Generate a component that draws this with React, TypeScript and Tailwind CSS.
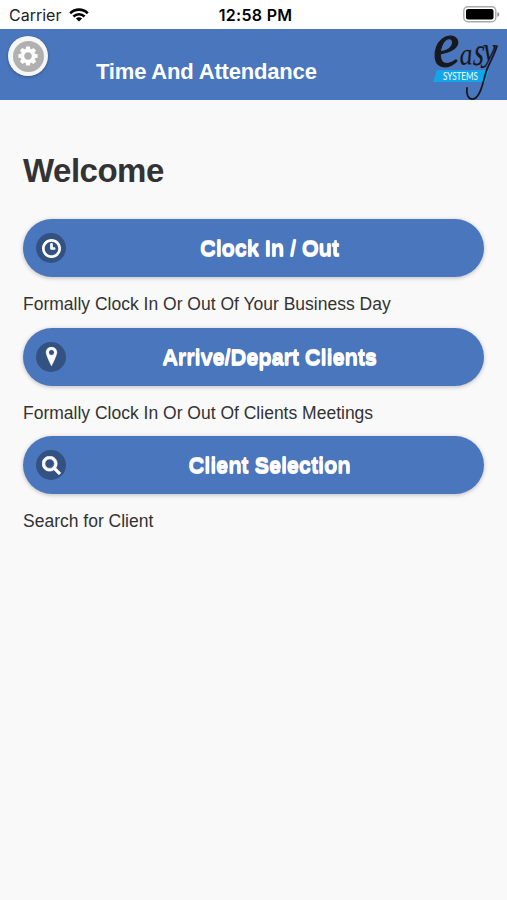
import type { ReactNode } from "react";

const LOCATION = "M7,0C4.791,0,3,1.791,3,4c0,2,4,10,4,10s4-8,4-10C11,1.791,9.209,0,7,0z M7,6C5.896,6,5,5.104,5,4s0.896-2,2-2c1.104,0,2,0.896,2,2S8.104,6,7,6z";
const CLOCK = "M7,0C3.134,0,0,3.134,0,7s3.134,7,7,7s7-3.134,7-7S10.866,0,7,0z M7,12c-2.762,0-5-2.238-5-5s2.238-5,5-5s5,2.238,5,5S9.762,12,7,12z M9,6H8V4c0-0.553-0.447-1-1-1S6,3.447,6,4v3c0,0.553,0.447,1,1,1h2c0.553,0,1-0.447,1-1S9.553,6,9,6z";
const SEARCH = "M10.171,8.766c0.617-0.888,0.979-1.964,0.979-3.126c0-3.037-2.463-5.5-5.5-5.5s-5.5,2.463-5.5,5.5s2.463,5.5,5.5,5.5c1.152,0,2.223-0.355,3.104-0.962l3.684,3.683l1.414-1.414L10.171,8.766z M5.649,9.14c-1.933,0-3.5-1.567-3.5-3.5c0-1.933,1.567-3.5,3.5-3.5c1.933,0,3.5,1.567,3.5,3.5C9.149,7.572,7.582,9.14,5.649,9.14z";

const actions = [
  { label: "Clock In / Out", icon: CLOCK, iconWeight: 0, description: "Formally Clock In Or Out Of Your Business Day" },
  { label: "Arrive/Depart Clients", icon: LOCATION, iconWeight: 0.3, description: "Formally Clock In Or Out Of Clients Meetings" },
  { label: "Client Selection", icon: SEARCH, iconWeight: 0.5, description: "Search for Client" },
];

function StatusBar() {
  return (
    <div className="grid h-[29px] grid-cols-3 items-center bg-white pr-[7px] pl-[9px] text-black">
      <div className="flex items-center gap-[8px]">
        <span className="font-[Inter,sans-serif] text-[16px] leading-none text-[#222]">Carrier</span>
        <svg className="h-[14px] w-5" viewBox="0 0 20 14" fill="none" stroke="currentColor" strokeWidth="2.6">
          <path d="M1.2 5.2C6.2 0.4 13.8 0.4 18.8 5.2" />
          <path d="M4.4 8.5C7.6 5.5 12.4 5.5 15.6 8.5" />
          <path d="M10 13.6L6.9 10.5C8.6 8.9 11.4 8.9 13.1 10.5Z" fill="currentColor" stroke="none" />
        </svg>
      </div>
      <span className="pl-[2px] text-center font-[Inter,sans-serif] text-[16px] leading-none font-semibold tracking-[0.3px]">12:58 PM</span>
      <svg className="h-[17px] w-[37px] justify-self-end" viewBox="0 0 37 17">
        <rect x="0.8" y="0.8" width="32" height="15" rx="4" fill="#fff" stroke="#aaa" strokeWidth="1.4" />
        <rect x="3" y="3" width="27.5" height="10.6" rx="2" fill="#000" />
        <path d="M34.4 6v4.8c2.4-0.8 2.4-4 0-4.8z" fill="#888" />
      </svg>
    </div>
  );
}

function GearIcon() {
  const teeth = [0, 45, 90, 135, 180, 225, 270, 315];
  return (
    <svg className="size-5" viewBox="-10 -10 20 20">
      {teeth.map((angle) => (
        <path key={angle} d="M-2.5 -6L-1.8 -9.6H1.8L2.5 -6Z" fill="#fff" transform={`rotate(${angle})`} />
      ))}
      <circle r="5.5" fill="none" stroke="#fff" strokeWidth="3.4" />
    </svg>
  );
}

function Logo() {
  return (
    <svg className="h-[70px] w-[68px] overflow-visible" viewBox="0 0 68 70">
      <path d="M5 38H57L53 50H1Z" fill="#12a5ea" />
      <g fill="#17191f" stroke="#17191f" fontFamily="Liberation Serif, serif" fontStyle="italic">
        <text transform="translate(2 35) rotate(-4) scale(.96 1)" fontSize="63" strokeWidth="1.2">e</text>
        <text transform="translate(28 33) rotate(-4) scale(.85 1)" fontSize="31" strokeWidth=".1">a</text>
        <text transform="translate(40.5 33) skewX(-6) scale(.7 1)" fontSize="40" strokeWidth=".1">s</text>
        <text transform="translate(51 29) scale(1 1.15)" fontSize="29" strokeWidth=".1">y</text>
      </g>
      {/* swash below the last letter */}
      <path d="M65 14C62 24 57 31 54 40C51 51 48 66 41 67C36 67.5 34 62 35 56" fill="none" stroke="#17191f" strokeWidth="1.8" strokeLinecap="round" />
      <text x="11" y="47.5" fill="#fff" fontFamily="Lato, sans-serif" fontSize="10.5" textLength="35" lengthAdjust="spacingAndGlyphs">SYSTEMS</text>
    </svg>
  );
}

function ActionButton({ icon, iconWeight, children }: { icon: string; iconWeight: number; children: ReactNode }) {
  return (
    <button className="flex h-[58px] w-full items-center rounded-full bg-[#4a76bd] pr-[13px] pl-[13px] shadow-[0_1px_4px_rgba(0,0,0,0.25)]">
      <span className="flex size-[30px] shrink-0 items-center justify-center rounded-full bg-[#335282]">
        <svg className="size-[19px]" viewBox="0 0 14 14" fill="#fff" stroke="#fff" strokeWidth={iconWeight}>
          <path d={icon} />
        </svg>
      </span>
      <span className="mr-[-2px] flex-1 pt-[2px] text-center text-[22px] leading-none font-bold tracking-[-0.2px] text-white [text-shadow:0_1px_0_#f3f3f3,0_-1px_0_#f3f3f3]">
        {children}
      </span>
    </button>
  );
}

export default function App() {
  return (
    <div className="flex h-[900px] w-[507px] flex-col overflow-hidden bg-[#f9f9f9] font-['Liberation_Sans',Arial,sans-serif] text-[#333]">
      <StatusBar />
      <header className="flex h-[71px] items-start bg-[#4a76bd] pr-[7px] pl-[8px]">
        <button className="mt-[7px] flex size-10 items-center justify-center rounded-full bg-[#f6f6f6] shadow-[0_1px_3px_rgba(0,0,0,0.3)]">
          <span className="flex size-[31px] items-center justify-center rounded-full bg-[#b0b0b0]">
            <GearIcon />
          </span>
        </button>
        <h1 className="mt-[32px] ml-[48px] flex-1 text-[22px] leading-[22px] font-bold tracking-[-0.18px] whitespace-nowrap text-white">
          Time And Attendance
        </h1>
        <div className="mt-[3px] h-[66px]">
          <Logo />
        </div>
      </header>
      <main className="px-[23px] pt-[51px]">
        <h2 className="text-[33px] leading-[40px] font-bold tracking-[-0.5px]">Welcome</h2>
        <div className="mt-[28px]">
          {actions.map((action) => (
            <section key={action.label} className="h-[108.5px]">
              <ActionButton icon={action.icon} iconWeight={action.iconWeight}>
                {action.label}
              </ActionButton>
              <p className="mt-[17px] text-[17.5px] leading-[20px] whitespace-nowrap">{action.description}</p>
            </section>
          ))}
        </div>
      </main>
    </div>
  );
}
